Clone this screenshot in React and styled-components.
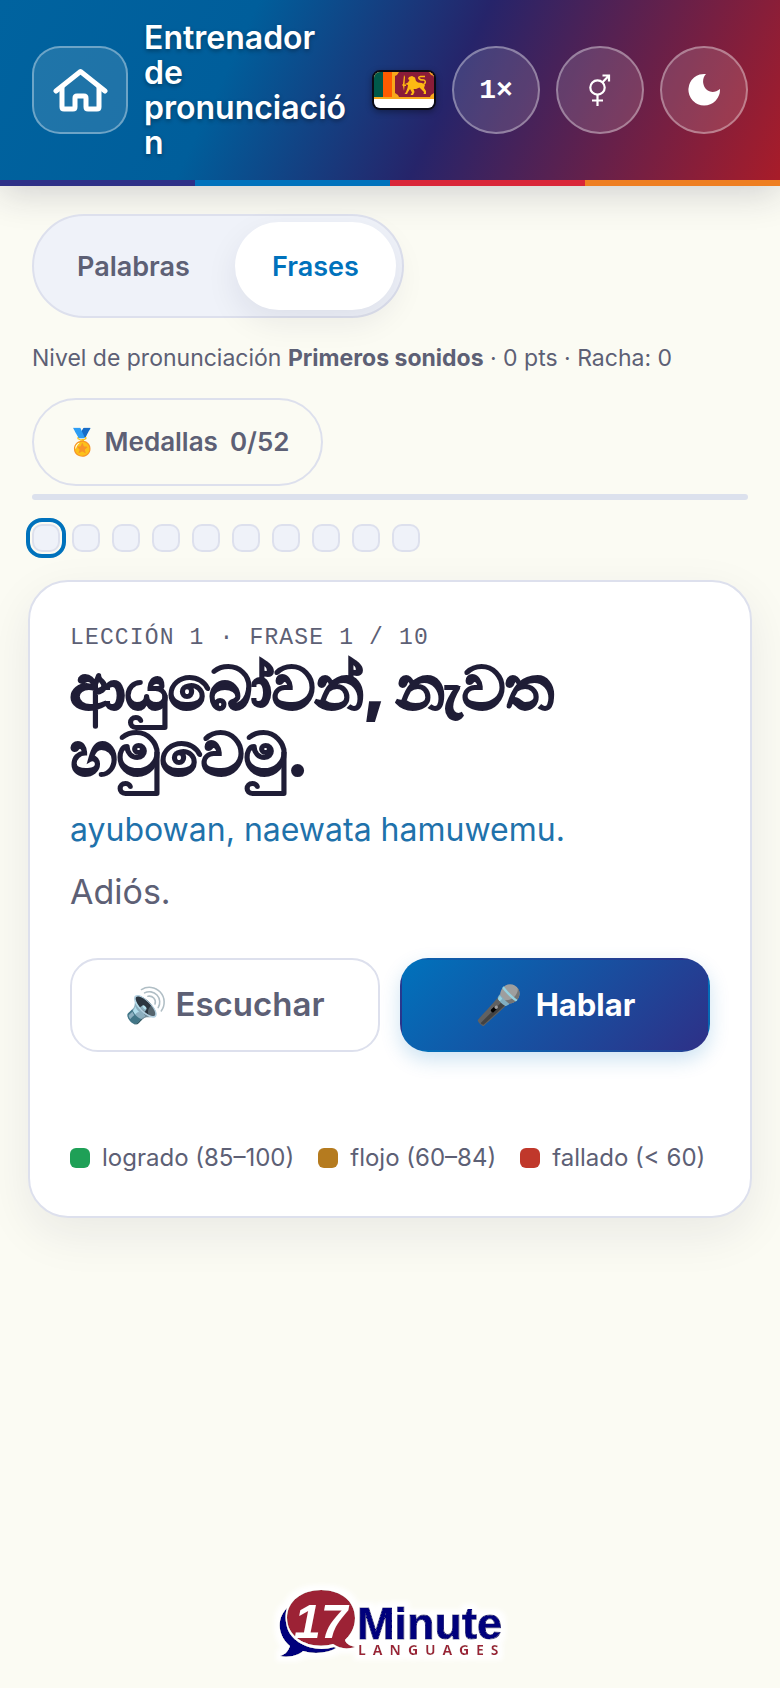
import React, { useState } from "react";
import styled, { createGlobalStyle, css } from "styled-components";

const GlobalStyle = createGlobalStyle`
  *, *::before, *::after {
    box-sizing: border-box;
  }
  body {
    margin: 0;
    background: #fbfbf3;
    color: #5d6075;
    font-family: Inter, "Noto Sans", sans-serif;
  }
  button {
    font-family: inherit;
    cursor: pointer;
  }
`;

const Page = styled.div`
  min-height: 100vh;
  display: flex;
  flex-direction: column;
`;

const Header = styled.header`
  display: flex;
  align-items: center;
  gap: 16px;
  padding: 20px 32px;
  background: linear-gradient(115deg, #00639f 0%, #005e9b 30%, #26246a 57%, #a81c29 100%);
  box-shadow: 0 12px 36px rgba(30, 30, 60, 0.2);
`;

const Stripe = styled.div`
  height: 6px;
  background: linear-gradient(
    90deg,
    #2e3087 25%,
    #0072bc 25% 50%,
    #d92638 50% 75%,
    #ee7f22 75%
  );
`;

const HomeLink = styled.a`
  flex: none;
  display: flex;
  align-items: center;
  justify-content: center;
  width: 96px;
  height: 88px;
  border: 2px solid rgba(255, 255, 255, 0.35);
  border-radius: 28px;
  background: rgba(255, 255, 255, 0.12);
  color: #fff;
`;

const Title = styled.h1`
  flex: 1;
  min-width: 0;
  margin: 0 8px 0 0;
  color: #fff;
  font-size: 32px;
  line-height: 35px;
  font-weight: 600;
  overflow-wrap: anywhere;
  text-shadow: 0 2px 4px rgba(0, 0, 0, 0.35);
`;

const FlagFrame = styled.span`
  flex: none;
  display: block;
  width: 64px;
  height: 40px;
  border: 2px solid #0b0b14;
  border-radius: 8px;
  overflow: hidden;
  box-shadow: 0 2px 6px rgba(0, 0, 0, 0.35);

  svg {
    display: block;
    width: 100%;
    height: 100%;
  }
`;

const RoundButton = styled.button`
  flex: none;
  display: flex;
  align-items: center;
  justify-content: center;
  width: 88px;
  height: 88px;
  padding: 0;
  border: 2px solid rgba(255, 255, 255, 0.35);
  border-radius: 50%;
  background: rgba(255, 255, 255, 0.13);
  color: #fff;
  font-family: "Liberation Mono", monospace;
  font-size: 28px;
  font-weight: 700;
`;

const Main = styled.main`
  flex: 1;
  display: flex;
  flex-direction: column;
  align-items: flex-start;
  padding: 28px 32px;
`;

const Tabs = styled.div`
  display: flex;
  gap: 8px;
  padding: 6px;
  border: 2px solid #dde0ed;
  border-radius: 52px;
  background: #eff2f9;
`;

const Tab = styled.button`
  height: 88px;
  padding: 0 37px;
  border: 0;
  border-radius: 44px;
  background: none;
  color: #5d6075;
  font-size: 27px;
  font-weight: 600;

  ${({ $active }) =>
    $active &&
    css`
      background: #fff;
      color: #0072bc;
      box-shadow: 0 12px 32px rgba(30, 30, 60, 0.08);
    `}
`;

const Level = styled.p`
  margin: 24px 0;
  font-size: 23px;
  line-height: 32px;
`;

const MedalButton = styled.button`
  display: flex;
  align-items: center;
  gap: 12px;
  height: 88px;
  padding: 0 32px 2px;
  border: 2px solid #dde0ed;
  border-radius: 44px;
  background: none;
  color: #5d6075;
  font-size: 26px;
  font-weight: 600;
`;

const Track = styled.div`
  align-self: stretch;
  height: 6px;
  margin: 8px 0 24px;
  border-radius: 3px;
  background: #dce1ed;
`;

const Steps = styled.div`
  display: flex;
  gap: 12px;
`;

const Step = styled.button`
  width: 28px;
  height: 28px;
  padding: 0;
  border: 2px solid #dde0ed;
  border-radius: 10px;
  background: #eff2f9;
  outline: ${({ $current }) => ($current ? "4px solid #0072bc" : "none")};
  outline-offset: 2px;
`;

const Card = styled.section`
  align-self: stretch;
  margin: 28px -4px 0;
  padding: 40px 40px 44px;
  border: 2px solid #dde0ed;
  border-radius: 40px;
  background: #fff;
  box-shadow: 0 16px 48px rgba(30, 30, 60, 0.08);
`;

const Eyebrow = styled.p`
  margin: 0;
  font-family: "Liberation Mono", monospace;
  font-size: 23px;
  line-height: 32px;
  letter-spacing: 0.05em;
  text-transform: uppercase;
`;

const Phrase = styled.h2`
  margin: 0 0 20px;
  color: #1f1d36;
  font-size: 60px;
  line-height: 66px;
  font-weight: 800;
  -webkit-text-stroke: 2px #1f1d36;
`;

const Romanized = styled.p`
  margin: 0 0 14px;
  color: #1f72ab;
  font-size: 32px;
  line-height: 48px;
`;

const Translation = styled.p`
  margin: 0;
  font-size: 34px;
  line-height: 48px;
`;

const Actions = styled.div`
  display: grid;
  grid-template-columns: 1fr 1fr;
  gap: 20px;
  margin: 42px 0 92px;
`;

const ActionButton = styled.button`
  display: flex;
  align-items: center;
  justify-content: center;
  gap: ${({ $primary }) => ($primary ? "14px" : "8px")};
  height: 94px;
  padding: 0 6px 2px;
  border: 2px solid ${({ $primary }) => ($primary ? "transparent" : "#dde0ed")};
  border-radius: 28px;
  background: ${({ $primary }) =>
    $primary ? "linear-gradient(135deg, #0072bc, #2e3087)" : "#fff"};
  box-shadow: ${({ $primary }) =>
    $primary ? "0 8px 20px rgba(0, 114, 188, 0.2)" : "none"};
  color: ${({ $primary }) => ($primary ? "#fff" : "#5d6075")};
  font-size: ${({ $primary }) => ($primary ? "31px" : "33px")};
  font-weight: ${({ $primary }) => ($primary ? 700 : 600)};
`;

const Emoji = styled.span`
  font-size: ${({ $large }) => ($large ? "38px" : "34px")};
`;

const Legend = styled.ul`
  display: flex;
  flex-wrap: wrap;
  gap: 12px 24px;
  margin: 0;
  padding: 0;
  list-style: none;
  font-size: 24px;
  line-height: 28px;
`;

const LegendItem = styled.li`
  display: flex;
  align-items: center;
  gap: 12px;

  &::before {
    content: "";
    width: 20px;
    height: 20px;
    border-radius: 6px;
    background: ${({ $color }) => $color};
  }
`;

const Footer = styled.footer`
  display: flex;
  justify-content: center;
  padding-bottom: 22px;
`;

const HomeIcon = () => (
  <svg width="56" height="48" viewBox="0 0 56 48" fill="none" stroke="#fff" strokeWidth="5" strokeLinecap="round" strokeLinejoin="round">
    <path d="M4 25L28.500 5.500L53 25" />
    <path d="M10 21V41Q10 43 12 43H21Q23 43 23 41V32Q23 30 25 30H32Q34 30 34 32V41Q34 43 36 43H45Q47 43 47 41V21" />
  </svg>
);

const GenderIcon = () => (
  <svg width="24" height="34" viewBox="0 0 24 34" fill="none" stroke="#fff" strokeWidth="2.200">
    <circle cx="9.500" cy="14.500" r="7.200" />
    <path d="M14.500 9.300L21 2.500M14.500 2.500H21V8.500M9.500 22V33M4 27.500H15" />
  </svg>
);

const MoonIcon = () => (
  <svg width="34" height="34" viewBox="0 0 34 34" fill="#fff">
    <path d="M19 1A15.800 15.800 0 1 0 33 16C27 21 20 19 17.500 14C15 9 16 4 19 1Z" />
  </svg>
);

const SriLankaFlag = () => (
  <svg viewBox="0 0 60 36" preserveAspectRatio="none">
    <path fill="#fff" d="M0 0H60V36H0Z" />
    <path fill="#f7a81b" d="M0 0H60V27H0Z" />
    <path fill="#00594a" d="M0 0H9V25H0Z" />
    <path fill="#ff5b00" d="M9 0H18V25H9Z" />
    <path fill="#8a1c38" d="M21 0H60V25H21Z" />
    <path fill="#f7a81b" d="M21 0H25L23 3L21 4ZM60 0H55L57 3L60 4ZM21 25V21L24 23L25 25ZM60 25V21L57 23L56 25Z" />
    <path fill="#fdb913" d="M30 3L31 5L30.500 12.500H32V14H30.500L30 19L29 14L28 13L29 12Z" />
    <path
      fill="#fdb913"
      d="M31 12L34 10.500L35.500 8L34 7L35 5L38 4L41 5.500L42 9L44 10.500L48 11L51 13L50 16L52 19V22H49.500L50 20L47 17L45.500 15.500L42 17L39.500 17L40.500 20L39 23H36.500L38 20.500L36 17L34 20L33 22H30.500L32 20L33.500 16L34 13Z"
    />
    <path fill="none" stroke="#fdb913" strokeWidth="1.500" d="M49.500 12.500Q53 10 50 8Q46 8 45 6.500Q44 5 46.500 4.500H51" />
  </svg>
);

const Logo = () => (
  <svg width="240" height="84" viewBox="0 0 240 84" role="img" aria-label="17 Minute Languages">
    <defs>
      <filter id="glow" x="-10%" y="-20%" width="120%" height="140%">
        <feMorphology in="SourceAlpha" operator="dilate" radius="5" result="grown" />
        <feGaussianBlur in="grown" stdDeviation="2" result="soft" />
        <feFlood floodColor="#fff" />
        <feComposite in2="soft" operator="in" result="halo" />
        <feMerge>
          <feMergeNode in="halo" />
          <feMergeNode in="SourceGraphic" />
        </feMerge>
      </filter>
    </defs>
    <g filter="url(#glow)">
      <path fill="#00007c" d="M17 26C5 38 9 55 20 64C18 70 14 73 10 74C19 76 29 73 33 69C46 73 60 70 66 66L64 65C45 71 24 62 18 48C15 39 15 32 17 26Z" />
      <path fill="#9c2436" d="M51 8C72 8 85 20 85 36C85 47 79 54 75 58C76 62 81 64 85 65C76 68 69 66 63 62C43 68 17 58 17 36C17 19 32 8 51 8Z" />
      <text x="24" y="56" fill="#fff" fontFamily="'Liberation Sans', sans-serif" fontSize="48" fontWeight="700" fontStyle="italic">17</text>
      <text x="87" y="57" fill="#00007c" stroke="#00007c" strokeWidth="1" fontFamily="'Liberation Sans', sans-serif" fontSize="45" fontWeight="700">Minute</text>
      <text x="88" y="73" fill="#9c2436" fontFamily="'Noto Sans', sans-serif" fontSize="14" fontWeight="700" letterSpacing="7">LANGUAGES</text>
    </g>
  </svg>
);

const legend = [
  { label: "logrado (85–100)", color: "#1fa057" },
  { label: "flojo (60–84)", color: "#b57b1f" },
  { label: "fallado (< 60)", color: "#c0382b" },
];

const App = () => {
  const [mode, setMode] = useState("Frases");
  const [step, setStep] = useState(0);

  return (
    <Page>
      <GlobalStyle />
      <Header>
        <HomeLink href="#" aria-label="Inicio">
          <HomeIcon />
        </HomeLink>
        <Title>Entrenador de pronunciación</Title>
        <FlagFrame>
          <SriLankaFlag />
        </FlagFrame>
        <RoundButton type="button">1×</RoundButton>
        <RoundButton type="button" aria-label="Voz">
          <GenderIcon />
        </RoundButton>
        <RoundButton type="button" aria-label="Modo oscuro">
          <MoonIcon />
        </RoundButton>
      </Header>
      <Stripe />
      <Main>
        <Tabs>
          {["Palabras", "Frases"].map((name) => (
            <Tab key={name} type="button" $active={mode === name} onClick={() => setMode(name)}>
              {name}
            </Tab>
          ))}
        </Tabs>
        <Level>
          Nivel de pronunciación <strong>Primeros sonidos</strong> · 0 pts · Racha: 0
        </Level>
        <MedalButton type="button">
          <span>🏅 Medallas</span>
          <span>0/52</span>
        </MedalButton>
        <Track />
        <Steps>
          {Array.from({ length: 10 }, (_, i) => (
            <Step
              key={i}
              type="button"
              aria-label={`Frase ${i + 1}`}
              $current={i === step}
              onClick={() => setStep(i)}
            />
          ))}
        </Steps>
        <Card>
          <Eyebrow>Lección 1 · Frase {step + 1} / 10</Eyebrow>
          <Phrase lang="si">ආයුබෝවන්, නැවත හමුවෙමු.</Phrase>
          <Romanized>ayubowan, naewata hamuwemu.</Romanized>
          <Translation>Adiós.</Translation>
          <Actions>
            <ActionButton type="button">
              <Emoji>🔊</Emoji>
              <span>Escuchar</span>
            </ActionButton>
            <ActionButton type="button" $primary>
              <Emoji $large>🎤</Emoji>
              <span>Hablar</span>
            </ActionButton>
          </Actions>
          <Legend>
            {legend.map(({ label, color }) => (
              <LegendItem key={label} $color={color}>
                {label}
              </LegendItem>
            ))}
          </Legend>
        </Card>
      </Main>
      <Footer>
        <Logo />
      </Footer>
    </Page>
  );
};

export default App;
